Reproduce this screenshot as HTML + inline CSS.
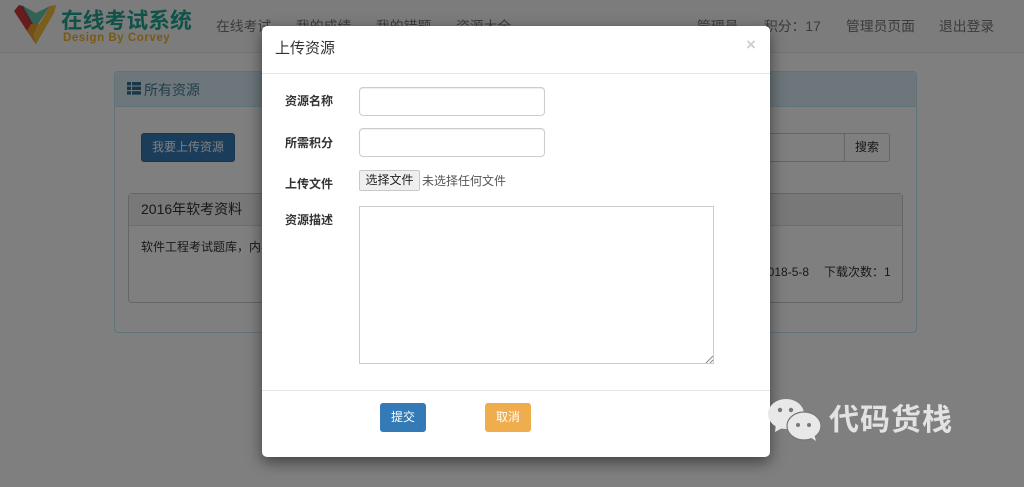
<!DOCTYPE html>
<html lang="zh">
<head>
<meta charset="utf-8">
<title>上传资源</title>
<style>
html,body{margin:0;padding:0;width:1024px;height:487px;overflow:hidden;background:#808080;}
*{box-sizing:border-box;}
body{font-family:"Liberation Sans","Noto Sans CJK SC",sans-serif;font-size:12px;color:#333;position:relative;}
.wrap{position:absolute;left:0;top:0;width:1024px;height:487px;background:#fff;overflow:hidden;filter:blur(.35px);}
.a{position:absolute;white-space:nowrap;}
.nav{left:0;top:0;width:1024px;height:53px;background:#f8f8f8;border-bottom:1px solid #e7e7e7;}
.nl{font-size:13.8px;line-height:20px;top:17px;color:#777;}
.panel{left:114px;top:71px;width:803px;height:262px;border:1px solid #bce8f1;border-radius:4px;background:#fff;}
.phead{left:0;top:0;width:801px;height:35px;background:#d9edf7;border-bottom:1px solid #bce8f1;}
.inner{left:13px;top:121px;width:775px;height:110px;border:1px solid #ccc;border-radius:4px;}
.ihead{left:0;top:0;width:773px;height:32px;background:#f0f0f0;border-bottom:1px solid #ddd;}
.overlay{left:0;top:0;width:1024px;height:487px;background:rgba(0,0,0,.5);}
.modal{left:262px;top:26px;width:508px;height:431px;background:#fff;border-radius:5px;box-shadow:0 5px 15px rgba(0,0,0,.5);}
.lab{font-size:12px;font-weight:bold;line-height:16px;color:#333;left:23px;}
.inp{left:97px;width:186px;height:29px;border:1px solid #ccc;border-radius:4px;background:#fff;box-shadow:inset 0 1px 1px rgba(0,0,0,.075);}
.btn{width:46px;height:29px;border-radius:3px;color:#fff;font-size:12px;line-height:29px;text-align:center;top:377px;}
</style>
</head>
<body>
<div class="wrap">
<div class="a nav"></div>

<svg class="a" style="left:13px;top:4px" width="44" height="42" viewBox="0 0 44 42">
<polygon points="1,7 6,1 17,17 20,30 23,40 14,27" fill="#d2393c"/>
<polygon points="6,1 10,2 23,10 23,21 18,21" fill="#a8404c"/>
<polygon points="10,2 23,9 37,2 25,20 20,20" fill="#69c2ab"/>
<polygon points="43,1 41,9 23,40 20,31 37,2" fill="#f2bd3a"/>
<polygon points="14,27 18,20 26,20 20,31 23,40" fill="#ea9a2c"/>
</svg>
<div class="a" style="left:61px;top:8px;font-size:21.800px;line-height:26px;font-weight:bold;color:#20a593;">在线考试系统</div>
<div class="a" style="left:63px;top:31px;font-size:11.500px;line-height:15px;font-weight:bold;color:#f0b429;letter-spacing:.55px">Design By Corvey</div>

<div class="a nl" style="left:216px">在线考试</div>
<div class="a nl" style="left:296px">我的成绩</div>
<div class="a nl" style="left:376px">我的错题</div>
<div class="a nl" style="left:456px">资源大全</div>
<div class="a nl" style="left:697px">管理员</div>
<div class="a nl" style="left:764px">积分：17</div>
<div class="a nl" style="left:846px">管理员页面</div>
<div class="a nl" style="left:939px">退出登录</div>

<div class="a panel">
  <div class="a phead"></div>
  <svg class="a" style="left:12px;top:10px" width="14" height="13" viewBox="0 0 14 13" fill="#31708f">
    <rect x="0" y="0" width="4" height="3.400"/><rect x="5" y="0" width="9" height="3.400"/>
    <rect x="0" y="4.600" width="4" height="3.400"/><rect x="5" y="4.600" width="9" height="3.400"/>
    <rect x="0" y="9.200" width="4" height="3.400"/><rect x="5" y="9.200" width="9" height="3.400"/>
  </svg>
  <div class="a" style="left:29px;top:8px;font-size:14px;line-height:20px;color:#4a7a92">所有资源</div>
  <div class="a" style="left:26px;top:61px;width:94px;height:29px;background:#337ab7;border:1px solid #2e6da4;border-radius:3px;color:#fff;font-size:12px;line-height:27px;text-align:center">我要上传资源</div>
  <div class="a" style="left:640px;top:61px;width:90px;height:29px;border:1px solid #ccc;background:#fff"></div>
  <div class="a" style="left:729px;top:61px;width:46px;height:29px;border:1px solid #ccc;border-radius:0 3px 3px 0;background:#fff;font-size:12px;line-height:27px;text-align:center;color:#333">搜索</div>
  <div class="a inner">
    <div class="a ihead"></div>
    <div class="a" style="left:12px;top:5px;font-size:14px;line-height:20px;color:#333">2016年软考资料</div>
    <div class="a" style="left:12px;top:44px;font-size:12px;line-height:18px;color:#333">软件工程考试题库，内容丰富</div>
    <div class="a" style="left:632px;top:69px;font-size:12px;line-height:18px;color:#333">2018-5-8</div>
    <div class="a" style="left:695px;top:69px;font-size:12px;line-height:18px;color:#333">下载次数：1</div>
  </div>
</div>

<div class="a overlay"></div>

<div class="a modal">
  <div class="a" style="left:13px;top:12px;font-size:15px;line-height:22px;color:#333">上传资源</div>
  <div class="a" style="left:484px;top:9px;font-size:17px;line-height:20px;font-weight:bold;color:#cfcfcf">×</div>
  <div class="a" style="left:0;top:47px;width:508px;height:1px;background:#e5e5e5"></div>

  <div class="a lab" style="top:67px">资源名称</div>
  <div class="a inp" style="top:61px"></div>
  <div class="a lab" style="top:109px">所需积分</div>
  <div class="a inp" style="top:102px"></div>
  <div class="a lab" style="top:150px">上传文件</div>
  <div class="a" style="left:97px;top:144px;width:61px;height:21px;background:#efefef;border:1px solid #c8c8c8;border-radius:2px;font-size:12px;line-height:19px;text-align:center;color:#222">选择文件</div>
  <div class="a" style="left:160px;top:146px;font-size:12px;line-height:18px;color:#555">未选择任何文件</div>
  <div class="a lab" style="top:186px">资源描述</div>
  <div class="a" style="left:97px;top:180px;width:355px;height:158px;border:1px solid #ccc;background:#fff"></div>
  <svg class="a" style="left:443px;top:329px" width="8" height="8" viewBox="0 0 8 8" stroke="#888" stroke-width="1"><path d="M1 8L8 1M5 8L8 5"/></svg>

  <div class="a" style="left:0;top:364px;width:508px;height:1px;background:#e5e5e5"></div>
  <div class="a btn" style="left:118px;background:#337ab7">提交</div>
  <div class="a btn" style="left:223px;background:#f0ad4e">取消</div>
</div>

<svg class="a" style="left:768px;top:398px" width="54" height="44" viewBox="0 0 54 44">
  <ellipse cx="18" cy="16" rx="18" ry="15" fill="#e8e8e8"/>
  <path d="M8 26L7 34L16 29z" fill="#e8e8e8"/>
  <circle cx="12" cy="12" r="2.200" fill="#777"/><circle cx="23" cy="12" r="2.200" fill="#777"/>
  <ellipse cx="36" cy="28" rx="17" ry="14" fill="#e8e8e8" stroke="#777" stroke-width="1.200"/>
  <path d="M42 39L48 43L46 36z" fill="#e8e8e8"/>
  <circle cx="30" cy="27" r="2" fill="#777"/><circle cx="41" cy="27" r="2" fill="#777"/>
</svg>
<div class="a" style="left:829px;top:403px;font-size:30px;line-height:36px;font-weight:bold;color:#e2e2e2;letter-spacing:1px">代码货栈</div>
</div>
</body>
</html>
